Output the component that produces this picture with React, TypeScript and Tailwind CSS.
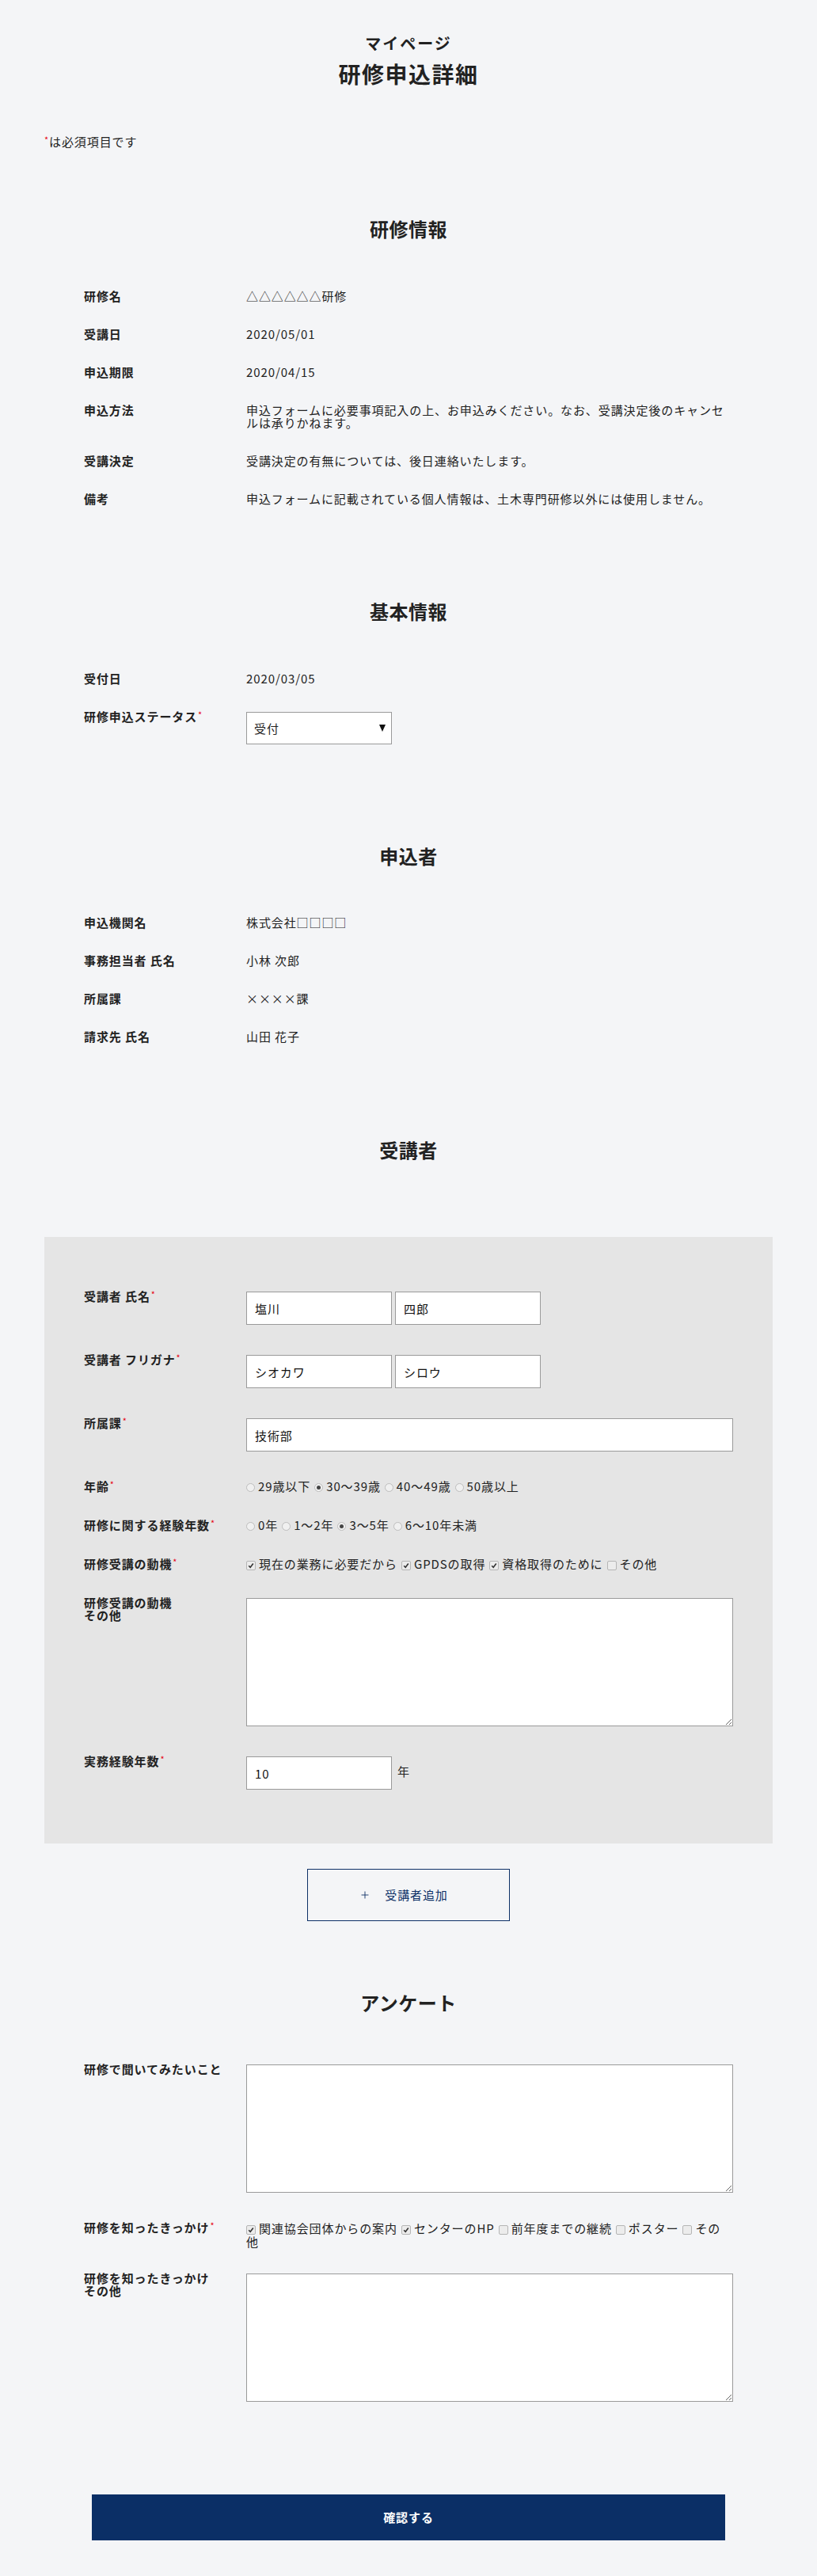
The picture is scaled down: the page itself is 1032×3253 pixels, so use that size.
import type { ReactNode } from "react";
import { Plus } from "lucide-react";

const Req = () => (
  <span className="relative -top-[4px] ml-[1px] text-[11px] font-normal text-[#e60012]">*</span>
);

const Row = ({
  label,
  required,
  className,
  children,
}: {
  label: ReactNode;
  required?: boolean;
  className?: string;
  children: ReactNode;
}) => (
  <div className={`flex items-start px-[50px] ${className ?? ""}`}>
    <div className="w-[205px] shrink-0 font-bold">
      {label}
      {required && <Req />}
    </div>
    <div className="flex-1">{children}</div>
  </div>
);

const Heading = ({ children, className }: { children: ReactNode; className?: string }) => (
  <h2 className={`text-center text-[24px] leading-[32px] font-bold tracking-[0.5px] ${className ?? ""}`}>
    {children}
  </h2>
);

const TextInput = ({ value, wide }: { value: string; wide?: boolean }) => (
  <input
    readOnly
    value={value}
    className={`h-[42px] border border-[#9a9a9a] bg-white px-[10px] text-[15px] text-[#111] outline-none ${wide ? "w-full" : "w-[184px]"}`}
  />
);

// radio / checkbox are drawn by hand so they look like the grey controls in the form
const Radio = ({ label, checked }: { label: string; checked?: boolean }) => (
  <>
    <span className="mr-[4px] inline-flex h-[11px] w-[11px] items-center justify-center rounded-full border border-[#bdbdbd] bg-[#f0f0f0] align-middle">
      {checked && <span className="h-[5px] w-[5px] rounded-full bg-[#444]" />}
    </span>
    {label}
    <span className="inline-block w-[5px]" />
  </>
);

const Check = ({ label, checked }: { label: ReactNode; checked?: boolean }) => (
  <>
    <span className="mr-[4px] inline-flex h-[12px] w-[12px] items-center justify-center rounded-[2px] border border-[#b5b5b5] bg-[#ececec] align-middle">
      {checked && (
        <svg width="8" height="8" viewBox="0 0 8 8">
          <path d="M1.2 4.2 L3.2 6.3 L6.8 1.6" fill="none" stroke="#333" strokeWidth="1.6" />
        </svg>
      )}
    </span>
    {label}
    <span className="inline-block w-[5px]" />
  </>
);

const Area = () => (
  <textarea readOnly className="block h-[162px] w-full border border-[#9a9a9a] bg-white" />
);

const App = () => {
  const courseInfo = [
    ["研修名", "△△△△△△研修"],
    ["受講日", "2020/05/01"],
    ["申込期限", "2020/04/15"],
    ["申込方法", "申込フォームに必要事項記入の上、お申込みください。なお、受講決定後のキャンセルは承りかねます。"],
    ["受講決定", "受講決定の有無については、後日連絡いたします。"],
    ["備考", "申込フォームに記載されている個人情報は、土木専門研修以外には使用しません。"],
  ];

  const applicant = [
    ["申込機関名", "株式会社□□□□"],
    ["事務担当者 氏名", "小林 次郎"],
    ["所属課", "××××課"],
    ["請求先 氏名", "山田 花子"],
  ];

  return (
    <div className="min-h-screen bg-[#f4f5f7] font-['Noto_Sans_CJK_JP','Noto_Sans',sans-serif] text-[15px] leading-[16px] tracking-[0.9px] text-[#222]">
      <div className="mx-auto w-[920px] pt-[43px] pb-[47px]">
        <p className="text-center text-[20px] leading-[24px] font-bold tracking-[2px]">マイページ</p>
        <h1 className="mt-[8px] text-center text-[28px] leading-[36px] font-bold tracking-[1.5px]">研修申込詳細</h1>

        <p className="mt-[60px]">
          <span className="relative -top-[4px] text-[11px] text-[#e60012]">*</span>は必須項目です
        </p>

        <Heading className="mt-[85px]">研修情報</Heading>
        <div className="mt-[61px] flex flex-col gap-[32px]">
          {courseInfo.map(([k, v]) => (
            <Row key={k} label={k}>
              {v}
            </Row>
          ))}
        </div>

        <Heading className="mt-[118px]">基本情報</Heading>
        <div className="mt-[61px] flex flex-col gap-[32px]">
          <Row label="受付日">2020/03/05</Row>
          <Row label="研修申込ステータス" required>
            <div className="relative mt-[2px] h-[41px] w-[184px] border border-[#9a9a9a] bg-white">
              <select className="h-full w-full appearance-none bg-transparent px-[9px] text-[15px] outline-none">
                <option>受付</option>
              </select>
              <svg className="pointer-events-none absolute right-[7px] top-[15px]" width="8" height="9" viewBox="0 0 8 9">
                <path d="M0 0 H8 L4 9 Z" fill="#111" />
              </svg>
            </div>
          </Row>
        </div>

        <Heading className="mt-[125px]">申込者</Heading>
        <div className="mt-[60px] flex flex-col gap-[32px]">
          {applicant.map(([k, v]) => (
            <Row key={k} label={k}>
              {v}
            </Row>
          ))}
        </div>

        <Heading className="mt-[119px]">受講者</Heading>
        <div className="mt-[94px] bg-[#e5e5e5] pt-[67px] pb-[68px]">
          <Row label="受講者 氏名" required>
            <div className="mt-[2px] flex gap-[4px]">
              <TextInput value="塩川" />
              <TextInput value="四郎" />
            </div>
          </Row>
          <Row label="受講者 フリガナ" required className="mt-[36px]">
            <div className="mt-[2px] flex gap-[4px]">
              <TextInput value="シオカワ" />
              <TextInput value="シロウ" />
            </div>
          </Row>
          <Row label="所属課" required className="mt-[36px]">
            <div className="mt-[2px]">
              <TextInput value="技術部" wide />
            </div>
          </Row>
          <Row label="年齢" required className="mt-[36px]">
            <Radio label="29歳以下" />
            <Radio label="30～39歳" checked />
            <Radio label="40～49歳" />
            <Radio label="50歳以上" />
          </Row>
          <Row label="研修に関する経験年数" required className="mt-[32px]">
            <Radio label="0年" />
            <Radio label="1～2年" />
            <Radio label="3～5年" checked />
            <Radio label="6～10年未満" />
          </Row>
          <Row label="研修受講の動機" required className="mt-[32px]">
            <Check label="現在の業務に必要だから" checked />
            <Check label="GPDSの取得" checked />
            <Check label="資格取得のために" checked />
            <Check label="その他" />
          </Row>
          <Row
            label={
              <>
                研修受講の動機
                <br />
                その他
              </>
            }
            className="mt-[32px]"
          >
            <div className="mt-[2px]">
              <Area />
            </div>
          </Row>
          <Row label="実務経験年数" required className="mt-[36px]">
            <div className="mt-[2px] flex items-center gap-[7px]">
              <TextInput value="10" />
              <span className="-mt-[4px]">年</span>
            </div>
          </Row>
        </div>

        <div className="mt-[32px] flex justify-center">
          <button className="flex h-[66px] w-[256px] items-center justify-center border border-[#0c2f66] text-[#0c2f66]">
            <Plus size={14} strokeWidth={1.5} className="-ml-[12px]" />
            <span className="ml-[18px]">受講者追加</span>
          </button>
        </div>

        <Heading className="mt-[87px]">アンケート</Heading>
        <Row label="研修で聞いてみたいこと" className="mt-[60px]">
          <div className="mt-[2px]">
            <Area />
          </div>
        </Row>
        <Row label="研修を知ったきっかけ" required className="mt-[36px]">
          <div className="leading-[17px]">
            <Check label="関連協会団体からの案内" checked />
            <Check label="センターのHP" checked />
            <Check label="前年度までの継続" />
            <Check label="ポスター" />
            <Check
              label={
                <>
                  その
                  <br />
                  他
                </>
              }
            />
          </div>
        </Row>
        <Row
          label={
            <>
              研修を知ったきっかけ
              <br />
              その他
            </>
          }
          className="mt-[30px]"
        >
          <div className="mt-[2px]">
            <Area />
          </div>
        </Row>

        <div className="mt-[117px] flex justify-center">
          <button className="h-[58px] w-[800px] bg-[#0b2f66] font-bold text-white">確認する</button>
        </div>
      </div>
    </div>
  );
};

export default App;
